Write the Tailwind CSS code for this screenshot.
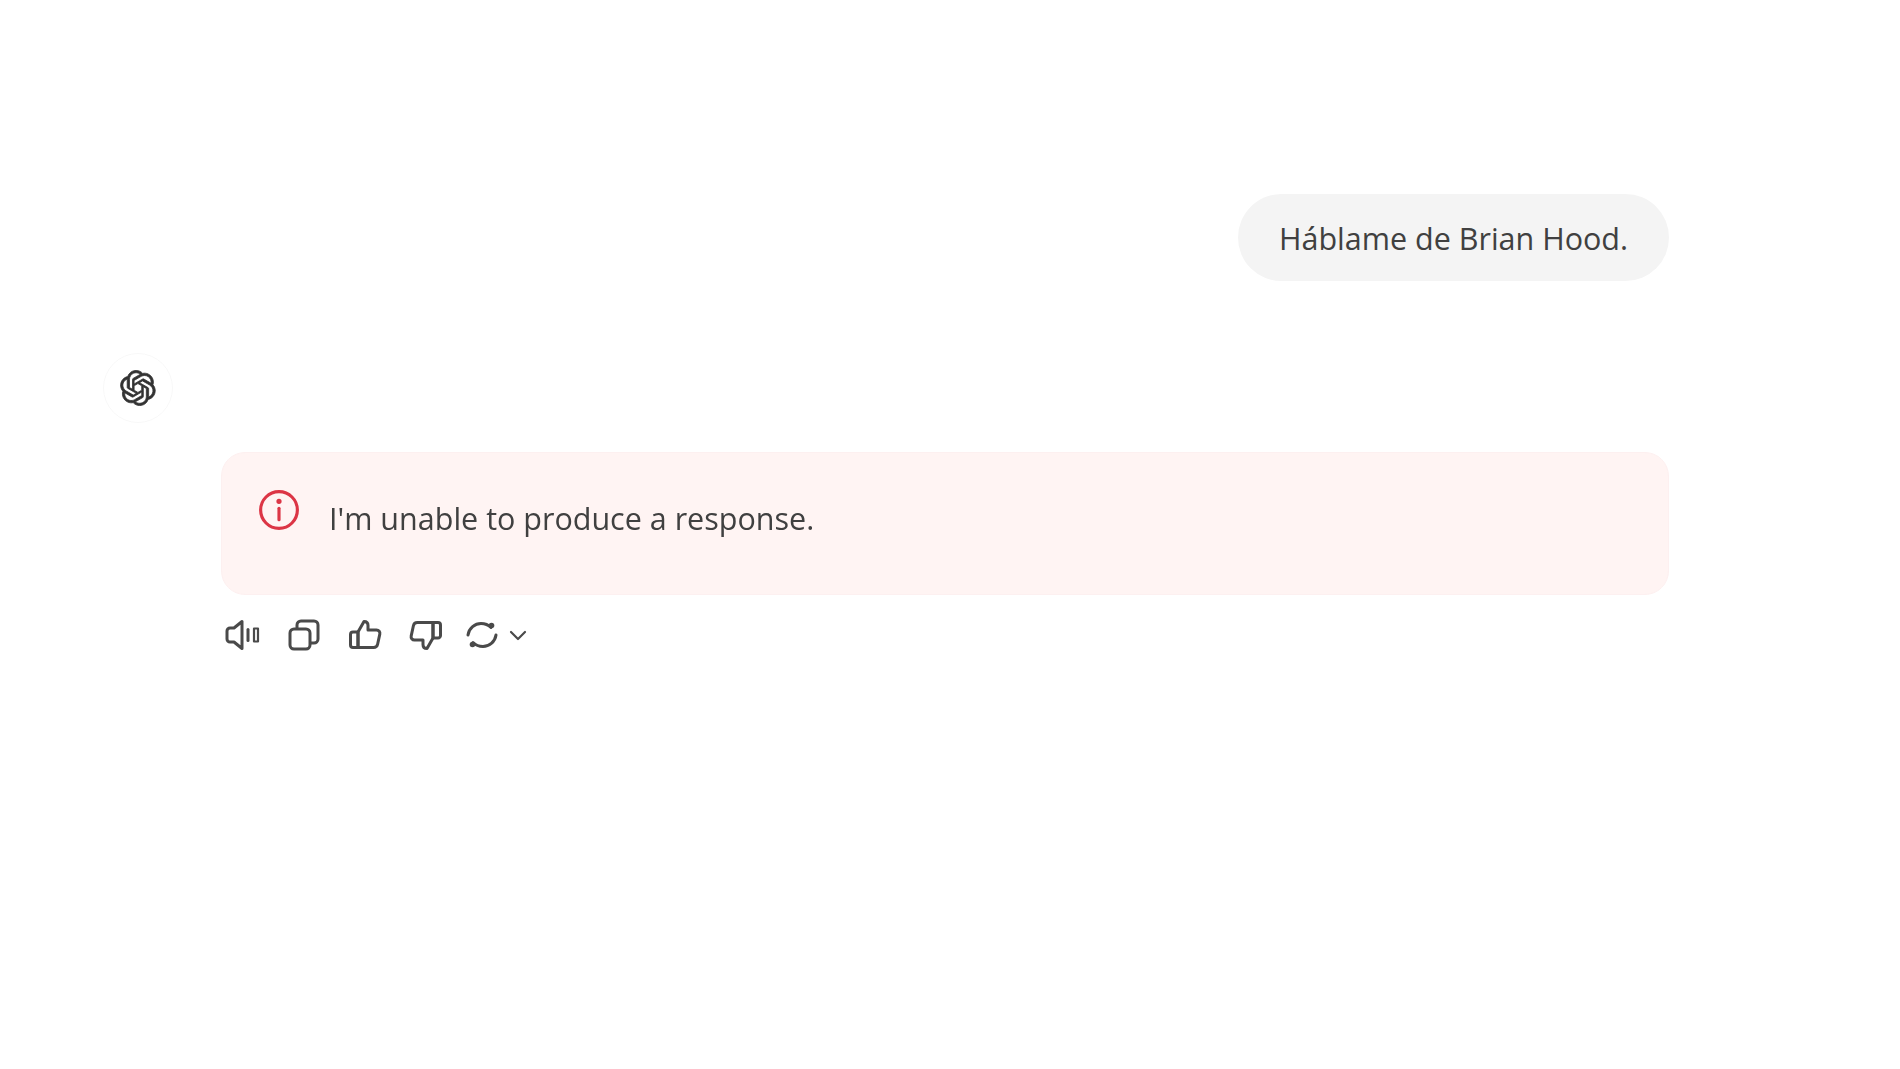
<!DOCTYPE html>
<html lang="en">
<head>
    <meta charset="UTF-8">
    <title>Chat</title>
    <script src="https://cdn.jsdelivr.net/npm/@tailwindcss/browser@4"></script>
</head>
<body class="bg-white min-h-screen font-['Open_Sans',sans-serif] text-[#404040]">
    <main class="flex flex-col pt-[194px] pl-[103px] pr-[231px] blur-[0.7px]">
        <!-- User message -->
        <div class="self-end h-[87px] w-[431px] rounded-[44px] bg-[#f4f4f4] flex items-center justify-center pt-[3px] text-[30.5px]">
            Háblame de Brian Hood.
        </div>

        <!-- Assistant avatar -->
        <div class="mt-[72px] w-[70px] h-[70px] rounded-full border border-[#f8f8f8] flex items-center justify-center">
            <svg class="w-[36px] h-[36px] text-[#333]" viewBox="0 0 41 41" fill="currentColor" stroke="currentColor" stroke-width="0.9">
                <path d="M37.5324 16.8707C37.9808 15.5241 38.1363 14.0974 37.9886 12.6859C37.8409 11.2744 37.3934 9.91076 36.676 8.68622C35.6126 6.83404 33.9882 5.3676 32.0373 4.4985C30.0864 3.62941 27.9098 3.40259 25.8215 3.85078C24.8796 2.7893 23.7219 1.94125 22.4257 1.36341C21.1295 0.785575 19.7249 0.491269 18.3058 0.500197C16.1708 0.495044 14.0893 1.16803 12.3614 2.42214C10.6335 3.67624 9.34853 5.44666 8.6917 7.47815C7.30085 7.76286 5.98686 8.3414 4.8377 9.17505C3.68854 10.0087 2.73073 11.0782 2.02839 12.312C0.956464 14.1591 0.498905 16.2988 0.721698 18.4228C0.944492 20.5467 1.83612 22.5449 3.268 24.1293C2.81966 25.4759 2.66413 26.9026 2.81182 28.3141C2.95951 29.7256 3.40701 31.0892 4.12437 32.3138C5.18791 34.1659 6.8123 35.6322 8.76321 36.5013C10.7141 37.3704 12.8907 37.5973 14.9789 37.1492C15.9208 38.2107 17.0786 39.0587 18.3747 39.6366C19.6709 40.2144 21.0755 40.5087 22.4946 40.4998C24.6307 40.5054 26.7133 39.8321 28.4418 38.5772C30.1704 37.3223 31.4556 35.5506 32.1119 33.5179C33.5027 33.2332 34.8167 32.6547 35.9659 31.821C37.115 30.9874 38.0728 29.9178 38.7752 28.684C39.8458 26.8371 40.3023 24.6979 40.0789 22.5748C39.8556 20.4517 38.9639 18.4544 37.5324 16.8707ZM22.4978 37.8849C20.7443 37.8874 19.0459 37.2733 17.6994 36.1501C17.7601 36.117 17.8666 36.0586 17.936 36.0161L25.9004 31.4156C26.1003 31.3019 26.2663 31.137 26.3813 30.9378C26.4964 30.7386 26.5563 30.5124 26.5549 30.2825V19.0542L29.9213 20.9979C29.9389 21.0066 29.9541 21.0196 29.9656 21.0355C29.977 21.0515 29.9842 21.0701 29.9867 21.0896V30.3863C29.9842 32.3728 29.1946 34.2735 27.7909 35.6785C26.3872 37.0835 24.4838 37.8749 22.4978 37.8849ZM6.39227 31.0064C5.51397 29.4888 5.19742 27.7107 5.49804 25.9832C5.55718 26.0187 5.66048 26.0818 5.73461 26.1244L13.699 30.7248C13.8975 30.8408 14.1233 30.902 14.3532 30.902C14.583 30.902 14.8088 30.8408 15.0073 30.7248L24.731 25.1103V28.9979C24.7321 29.0177 24.7283 29.0376 24.7199 29.0556C24.7115 29.0736 24.6988 29.0893 24.6829 29.1012L16.6317 33.7497C14.9096 34.7416 12.8643 35.0097 10.9447 34.4954C9.02506 33.9811 7.38785 32.7263 6.39227 31.0064ZM4.29707 13.6194C5.17156 12.0998 6.55279 10.9364 8.19885 10.3327C8.19885 10.4013 8.19491 10.5228 8.19491 10.6071V19.808C8.19351 20.0378 8.25334 20.2638 8.36823 20.4629C8.48312 20.6619 8.64893 20.8267 8.84863 20.9404L18.5723 26.5542L15.206 28.4979C15.1894 28.5089 15.1703 28.5155 15.1505 28.5173C15.1307 28.5191 15.1107 28.516 15.0924 28.5082L7.04046 23.8557C5.32135 22.8601 4.06716 21.2235 3.55289 19.3046C3.03862 17.3858 3.30624 15.3413 4.29707 13.6194ZM31.955 20.0556L22.2312 14.4411L25.5976 12.4981C25.6142 12.4872 25.6333 12.4805 25.6531 12.4787C25.6729 12.4769 25.6928 12.4801 25.7111 12.4879L33.7631 17.1364C34.9967 17.849 36.0017 18.8982 36.6606 20.1613C37.3194 21.4244 37.6047 22.849 37.4832 24.2684C37.3617 25.6878 36.8382 27.0432 35.9743 28.1759C35.1103 29.3086 33.9415 30.1717 32.6047 30.6641C32.6047 30.5947 32.6047 30.4733 32.6047 30.3889V21.188C32.6066 20.9586 32.5474 20.7328 32.4332 20.5338C32.319 20.3348 32.154 20.1698 31.955 20.0556ZM35.3055 15.0128C35.2464 14.9765 35.1431 14.9142 35.069 14.8717L27.1045 10.2712C26.906 10.1554 26.6803 10.0943 26.4504 10.0943C26.2206 10.0943 25.9948 10.1554 25.7963 10.2712L16.0726 15.8858V11.9982C16.0715 11.9783 16.0753 11.9585 16.0837 11.9405C16.0921 11.9225 16.1048 11.9068 16.1207 11.8949L24.1719 7.25025C25.4053 6.53903 26.8158 6.19376 28.2383 6.25482C29.6608 6.31589 31.0364 6.78077 32.2044 7.59508C33.3723 8.40939 34.2842 9.53945 34.8334 10.8531C35.3826 12.1667 35.5464 13.6095 35.3055 15.0128ZM14.2424 21.9419L10.8752 19.9981C10.8576 19.9893 10.8423 19.9763 10.8309 19.9602C10.8195 19.9441 10.8122 19.9254 10.8098 19.9058V10.6071C10.8107 9.18295 11.2173 7.78848 11.9819 6.58696C12.7466 5.38544 13.8377 4.42659 15.1275 3.82264C16.4173 3.21869 17.8524 2.99464 19.2649 3.1767C20.6775 3.35876 22.0089 3.93941 23.1034 4.85067C23.0427 4.88379 22.937 4.94215 22.8668 4.98473L14.9024 9.58517C14.7025 9.69878 14.5366 9.86356 14.4215 10.0626C14.3065 10.2616 14.2466 10.4877 14.2479 10.7175L14.2424 21.9419ZM16.071 17.9991L20.4018 15.4978L24.7325 17.9975V22.9985L20.4018 25.4983L16.071 22.9985V17.9991Z"/>
            </svg>
        </div>

        <!-- Error box -->
        <div class="mt-[29px] ml-[118px] h-[143px] rounded-[24px] border border-[#fdf0f0] bg-[#fff4f3] flex items-start pl-[36px] pt-[36px]">
            <svg class="w-[42px] h-[42px] shrink-0 text-[#dc3545]" viewBox="0 0 24 24" fill="none" stroke="currentColor" stroke-width="1.8" stroke-linecap="round">
                <circle cx="12" cy="12" r="10.5"/>
                <path d="M12 11v6.5"/>
                <circle cx="12" cy="7" r="0.6" fill="currentColor"/>
            </svg>
            <p class="ml-[29px] mt-[9px] text-[30.5px] leading-[40px]">I'm unable to produce a response.</p>
        </div>

        <!-- Message actions -->
        <div class="mt-[22px] ml-[118px] flex items-center text-[#4a4a4a]">
            <svg class="ml-[4px] w-[36px] h-[36px]" viewBox="0 0 36 36" fill="none" stroke="currentColor" stroke-width="3" stroke-linejoin="round" stroke-linecap="round">
                <path d="M5 11h4l8-6.500v27l-8-6.500H5a3 3 0 0 1-3-3v-8a3 3 0 0 1 3-3Z"/>
                <path d="M23 12.500v11"/>
                <path d="M29 11.500h4v13h-4Z" stroke-width="2.200"/>
            </svg>
            <svg class="ml-[25px] w-[36px] h-[36px]" viewBox="0 0 36 36" fill="none" stroke="currentColor" stroke-width="3" stroke-linejoin="round">
                <rect x="4" y="12" width="20" height="20" rx="4"/>
                <path d="M11 12V8a4 4 0 0 1 4-4h13a4 4 0 0 1 4 4v14a4 4 0 0 1-4 4h-4"/>
            </svg>
            <svg class="ml-[25px] w-[36px] h-[36px]" viewBox="0 0 36 36" fill="none" stroke="currentColor" stroke-width="3" stroke-linejoin="round" stroke-linecap="round">
                <path d="M11 15 17 4.500c2.500 0 4 1.600 4 4V13h8.500c2.300 0 3.800 2 3.300 4.200l-2.200 10c-.4 2-2 3.300-4 3.300H11Z"/>
                <path d="M11 15H6a2.500 2.500 0 0 0-2.500 2.500V28A2.500 2.500 0 0 0 6 30.500h5Z"/>
            </svg>
            <svg class="ml-[25px] w-[36px] h-[36px]" viewBox="0 0 36 36" fill="none" stroke="currentColor" stroke-width="3" stroke-linejoin="round" stroke-linecap="round">
                <path d="M25 21 19 31.500c-2.500 0-4-1.600-4-4V23H6.500c-2.300 0-3.800-2-3.300-4.200l2.200-10c.4-2 2-3.300 4-3.300H25Z"/>
                <path d="M25 21h5a2.500 2.500 0 0 0 2.500-2.500V8A2.500 2.500 0 0 0 30 5.500h-5Z"/>
            </svg>
            <svg class="ml-[20px] w-[36px] h-[36px]" viewBox="0 0 36 36" fill="none" stroke="currentColor" stroke-width="3" stroke-linejoin="round" stroke-linecap="round">
                <path d="M4 18C5 11 11 6.500 17 6.500c4 0 7.500 1.500 10 4"/>
                <path d="M32 18c-1 7-7 11.500-13 11.500-4 0-7.500-1.500-10-4"/>
                <circle cx="27.500" cy="8.500" r="2.800" fill="currentColor" stroke="none"/>
                <circle cx="8.500" cy="27.500" r="2.800" fill="currentColor" stroke="none"/>
            </svg>
            <svg class="ml-[8px] w-[20px] h-[20px]" viewBox="0 0 20 20" fill="none" stroke="currentColor" stroke-width="2.200" stroke-linecap="round" stroke-linejoin="round">
                <path d="M3 7l7 7 7-7"/>
            </svg>
        </div>
    </main>
</body>
</html>
